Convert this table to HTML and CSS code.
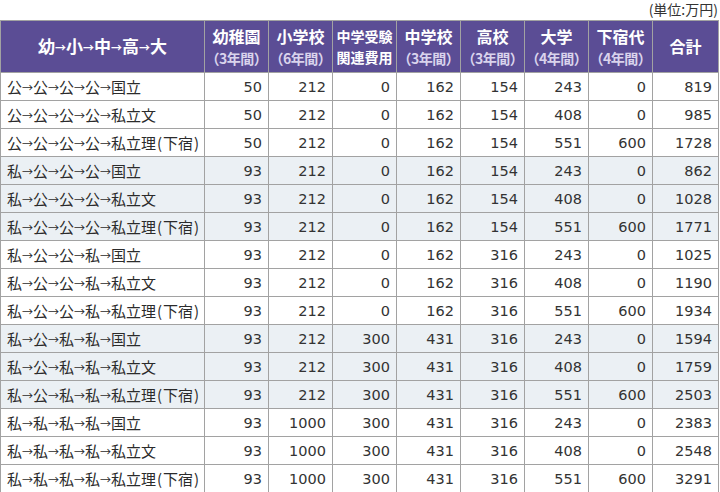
FILE: index.html
```html
<!DOCTYPE html>
<html lang="ja">
<head>
<meta charset="utf-8">
<link rel="stylesheet" href="styles.css">
</head>
<body>
<div class="wrap">
  <div class="unit">(単位:万円)</div>
  <table class="cost">
    <colgroup>
      <col class="c-route">
      <col class="c-num"><col class="c-num"><col class="c-num"><col class="c-num">
      <col class="c-num"><col class="c-num"><col class="c-num"><col class="c-total">
    </colgroup>
    <thead>
      <tr>
        <th class="h-route">幼<span class="arr">→</span>小<span class="arr">→</span>中<span class="arr">→</span>高<span class="arr">→</span>大</th>
        <th><span class="t">幼稚園</span><span class="s">（3年間）</span></th>
        <th><span class="t">小学校</span><span class="s">（6年間）</span></th>
        <th class="h-small"><span class="t">中学受験</span><span class="t">関連費用</span></th>
        <th><span class="t">中学校</span><span class="s">（3年間）</span></th>
        <th><span class="t">高校</span><span class="s">（3年間）</span></th>
        <th><span class="t">大学</span><span class="s">（4年間）</span></th>
        <th><span class="t">下宿代</span><span class="s">（4年間）</span></th>
        <th><span class="t">合計</span></th>
      </tr>
    </thead>
    <tbody>
      <tr><td class="route">公<span class="arr">→</span>公<span class="arr">→</span>公<span class="arr">→</span>公<span class="arr">→</span>国立</td><td>50</td><td>212</td><td>0</td><td>162</td><td>154</td><td>243</td><td>0</td><td>819</td></tr>
      <tr><td class="route">公<span class="arr">→</span>公<span class="arr">→</span>公<span class="arr">→</span>公<span class="arr">→</span>私立文</td><td>50</td><td>212</td><td>0</td><td>162</td><td>154</td><td>408</td><td>0</td><td>985</td></tr>
      <tr><td class="route">公<span class="arr">→</span>公<span class="arr">→</span>公<span class="arr">→</span>公<span class="arr">→</span>私立理<span class="p">(</span>下宿<span class="p">)</span></td><td>50</td><td>212</td><td>0</td><td>162</td><td>154</td><td>551</td><td>600</td><td>1728</td></tr>
      <tr class="alt"><td class="route">私<span class="arr">→</span>公<span class="arr">→</span>公<span class="arr">→</span>公<span class="arr">→</span>国立</td><td>93</td><td>212</td><td>0</td><td>162</td><td>154</td><td>243</td><td>0</td><td>862</td></tr>
      <tr class="alt"><td class="route">私<span class="arr">→</span>公<span class="arr">→</span>公<span class="arr">→</span>公<span class="arr">→</span>私立文</td><td>93</td><td>212</td><td>0</td><td>162</td><td>154</td><td>408</td><td>0</td><td>1028</td></tr>
      <tr class="alt"><td class="route">私<span class="arr">→</span>公<span class="arr">→</span>公<span class="arr">→</span>公<span class="arr">→</span>私立理<span class="p">(</span>下宿<span class="p">)</span></td><td>93</td><td>212</td><td>0</td><td>162</td><td>154</td><td>551</td><td>600</td><td>1771</td></tr>
      <tr><td class="route">私<span class="arr">→</span>公<span class="arr">→</span>公<span class="arr">→</span>私<span class="arr">→</span>国立</td><td>93</td><td>212</td><td>0</td><td>162</td><td>316</td><td>243</td><td>0</td><td>1025</td></tr>
      <tr><td class="route">私<span class="arr">→</span>公<span class="arr">→</span>公<span class="arr">→</span>私<span class="arr">→</span>私立文</td><td>93</td><td>212</td><td>0</td><td>162</td><td>316</td><td>408</td><td>0</td><td>1190</td></tr>
      <tr><td class="route">私<span class="arr">→</span>公<span class="arr">→</span>公<span class="arr">→</span>私<span class="arr">→</span>私立理<span class="p">(</span>下宿<span class="p">)</span></td><td>93</td><td>212</td><td>0</td><td>162</td><td>316</td><td>551</td><td>600</td><td>1934</td></tr>
      <tr class="alt"><td class="route">私<span class="arr">→</span>公<span class="arr">→</span>私<span class="arr">→</span>私<span class="arr">→</span>国立</td><td>93</td><td>212</td><td>300</td><td>431</td><td>316</td><td>243</td><td>0</td><td>1594</td></tr>
      <tr class="alt"><td class="route">私<span class="arr">→</span>公<span class="arr">→</span>私<span class="arr">→</span>私<span class="arr">→</span>私立文</td><td>93</td><td>212</td><td>300</td><td>431</td><td>316</td><td>408</td><td>0</td><td>1759</td></tr>
      <tr class="alt"><td class="route">私<span class="arr">→</span>公<span class="arr">→</span>私<span class="arr">→</span>私<span class="arr">→</span>私立理<span class="p">(</span>下宿<span class="p">)</span></td><td>93</td><td>212</td><td>300</td><td>431</td><td>316</td><td>551</td><td>600</td><td>2503</td></tr>
      <tr><td class="route">私<span class="arr">→</span>私<span class="arr">→</span>私<span class="arr">→</span>私<span class="arr">→</span>国立</td><td>93</td><td>1000</td><td>300</td><td>431</td><td>316</td><td>243</td><td>0</td><td>2383</td></tr>
      <tr><td class="route">私<span class="arr">→</span>私<span class="arr">→</span>私<span class="arr">→</span>私<span class="arr">→</span>私立文</td><td>93</td><td>1000</td><td>300</td><td>431</td><td>316</td><td>408</td><td>0</td><td>2548</td></tr>
      <tr><td class="route">私<span class="arr">→</span>私<span class="arr">→</span>私<span class="arr">→</span>私<span class="arr">→</span>私立理<span class="p">(</span>下宿<span class="p">)</span></td><td>93</td><td>1000</td><td>300</td><td>431</td><td>316</td><td>551</td><td>600</td><td>3291</td></tr>
    </tbody>
  </table>
</div>
</body>
</html>
```
FILE: styles.css
```css
html, body {
  margin: 0;
  padding: 0;
  background: #ffffff;
}

body {
  font-family: "Noto Sans CJK JP", "Noto Sans", sans-serif;
  color: #2b2b2b;
}

.wrap {
  width: 720px;
}

.unit {
  height: 20px;
  width: 718px;
  text-align: right;
  font-size: 14px;
  line-height: 18px;
  color: #333333;
}

.cost {
  border-collapse: collapse;
  table-layout: fixed;
  width: 719px;
}

.c-route { width: 204px; }
.c-num { width: 64px; }
.c-total { width: 66px; }

.cost th,
.cost td {
  border: 1px solid #a2a2a2;
  padding: 0;
  white-space: nowrap;
}

.cost th {
  background: #5b4d95;
  color: #ffffff;
  height: 51px;
  font-weight: 700;
  font-size: 16px;
  line-height: 23px;
  text-align: center;
  vertical-align: middle;
}

.cost th .t,
.cost th .s {
  display: block;
}

.cost th .s {
  font-size: 14px;
  line-height: 20px;
  color: #d9d3ec;
  letter-spacing: -0.5px;
}

.cost th.h-small {
  font-size: 14px;
  line-height: 21px;
}

.cost th.h-route {
  font-size: 17px;
}

.cost td {
  height: 27px;
  font-family: "DejaVu Sans", "Noto Sans", sans-serif;
  font-size: 14.5px;
  line-height: 20px;
  color: #333333;
  text-align: right;
  padding-right: 6px;
}

.cost td.route {
  font-family: "Noto Sans CJK JP", "Noto Sans", sans-serif;
  font-size: 15px;
  color: #2b2b2b;
  text-align: left;
  padding-left: 6px;
  padding-right: 0;
}

.arr {
  display: inline-block;
  width: 11px;
  font-size: 11px;
  text-align: center;
  vertical-align: 1px;
}

.p {
  display: inline-block;
  width: 7px;
  text-align: center;
}

.alt td {
  background: #ebf0f4;
}
```
